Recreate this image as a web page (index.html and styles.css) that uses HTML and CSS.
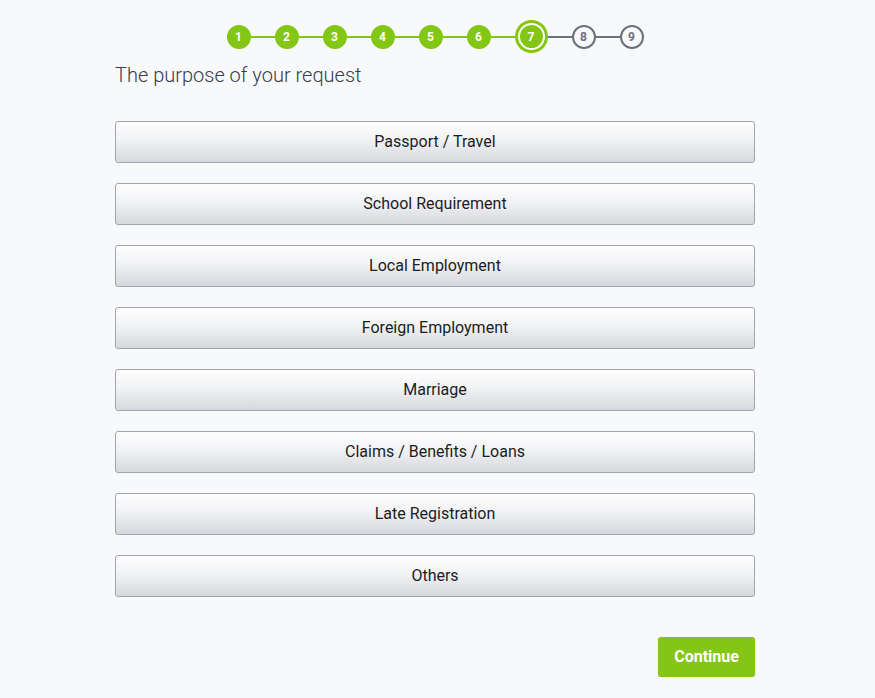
FILE: index.html
```html
<!DOCTYPE html>
<html lang="en">
<head>
<meta charset="utf-8">
<title>Purpose of request</title>
<link rel="stylesheet" href="styles.css">
</head>
<body>
<main class="page">
  <ol class="steps">
    <li class="step done">1</li>
    <li class="line done"></li>
    <li class="step done">2</li>
    <li class="line done"></li>
    <li class="step done">3</li>
    <li class="line done"></li>
    <li class="step done">4</li>
    <li class="line done"></li>
    <li class="step done">5</li>
    <li class="line done"></li>
    <li class="step done">6</li>
    <li class="line done"></li>
    <li class="step current">7</li>
    <li class="line"></li>
    <li class="step">8</li>
    <li class="line"></li>
    <li class="step">9</li>
  </ol>
  <h1 class="title">The purpose of your request</h1>
  <div class="options">
    <button class="option">Passport / Travel</button>
    <button class="option">School Requirement</button>
    <button class="option">Local Employment</button>
    <button class="option">Foreign Employment</button>
    <button class="option">Marriage</button>
    <button class="option">Claims / Benefits / Loans</button>
    <button class="option">Late Registration</button>
    <button class="option">Others</button>
  </div>
  <div class="actions">
    <button class="continue">Continue</button>
  </div>
</main>
</body>
</html>
```
FILE: styles.css
```css
html, body {
  margin: 0;
  padding: 0;
  background: #f8f9fb;
}
body {
  font-family: Roboto, "Liberation Sans", Arial, sans-serif;
  color: #1f1f24;
}
.page {
  width: 640px;
  margin: 0 0 0 115px;
  padding-top: 20px;
}
.steps {
  list-style: none;
  margin: 0;
  padding: 0;
  display: flex;
  align-items: center;
  justify-content: center;
  height: 33px;
}
.step {
  width: 24px;
  height: 24px;
  box-sizing: border-box;
  border-radius: 50%;
  border: 2px solid #6c717f;
  color: #6c717f;
  background: #f8f9fb;
  font-size: 12px;
  font-weight: 700;
  display: flex;
  align-items: center;
  justify-content: center;
  line-height: 1;
}
.step.done {
  background: #84c615;
  border-color: #84c615;
  color: #ffffff;
}
.step.current {
  width: 23px;
  height: 23px;
  margin: 0 5px;
  border: none;
  background: #84c615;
  color: #ffffff;
  box-shadow: 0 0 0 2px #ffffff, 0 0 0 5px #84c615;
}
.line {
  width: 24px;
  height: 2px;
  background: #6c717f;
}
.line.done {
  background: #84c615;
}
.title {
  margin: 10px 0 0;
  font-size: 20px;
  line-height: 24px;
  font-weight: 300;
  color: #3b3a48;
}
.options {
  margin-top: 34px;
  display: flex;
  flex-direction: column;
  gap: 20px;
}
.option {
  height: 42px;
  width: 100%;
  border: 1px solid #a3a4ae;
  border-radius: 3px;
  background: linear-gradient(to bottom, #fefefe 0%, #f1f2f4 45%, #d7d8dd 100%);
  font-family: Roboto, "Liberation Sans", Arial, sans-serif;
  font-size: 16px;
  color: #1c1c22;
  padding: 0 0 2px;
  cursor: pointer;
}
.actions {
  margin-top: 40px;
  display: flex;
  justify-content: flex-end;
}
.continue {
  width: 97px;
  height: 40px;
  border: none;
  border-radius: 3px;
  background: #84c615;
  color: #ffffff;
  font-family: Roboto, "Liberation Sans", Arial, sans-serif;
  font-size: 16px;
  font-weight: 700;
  padding: 0 0 2px;
  box-shadow: 0 1px 2px rgba(0,0,0,0.12);
  cursor: pointer;
}
```
